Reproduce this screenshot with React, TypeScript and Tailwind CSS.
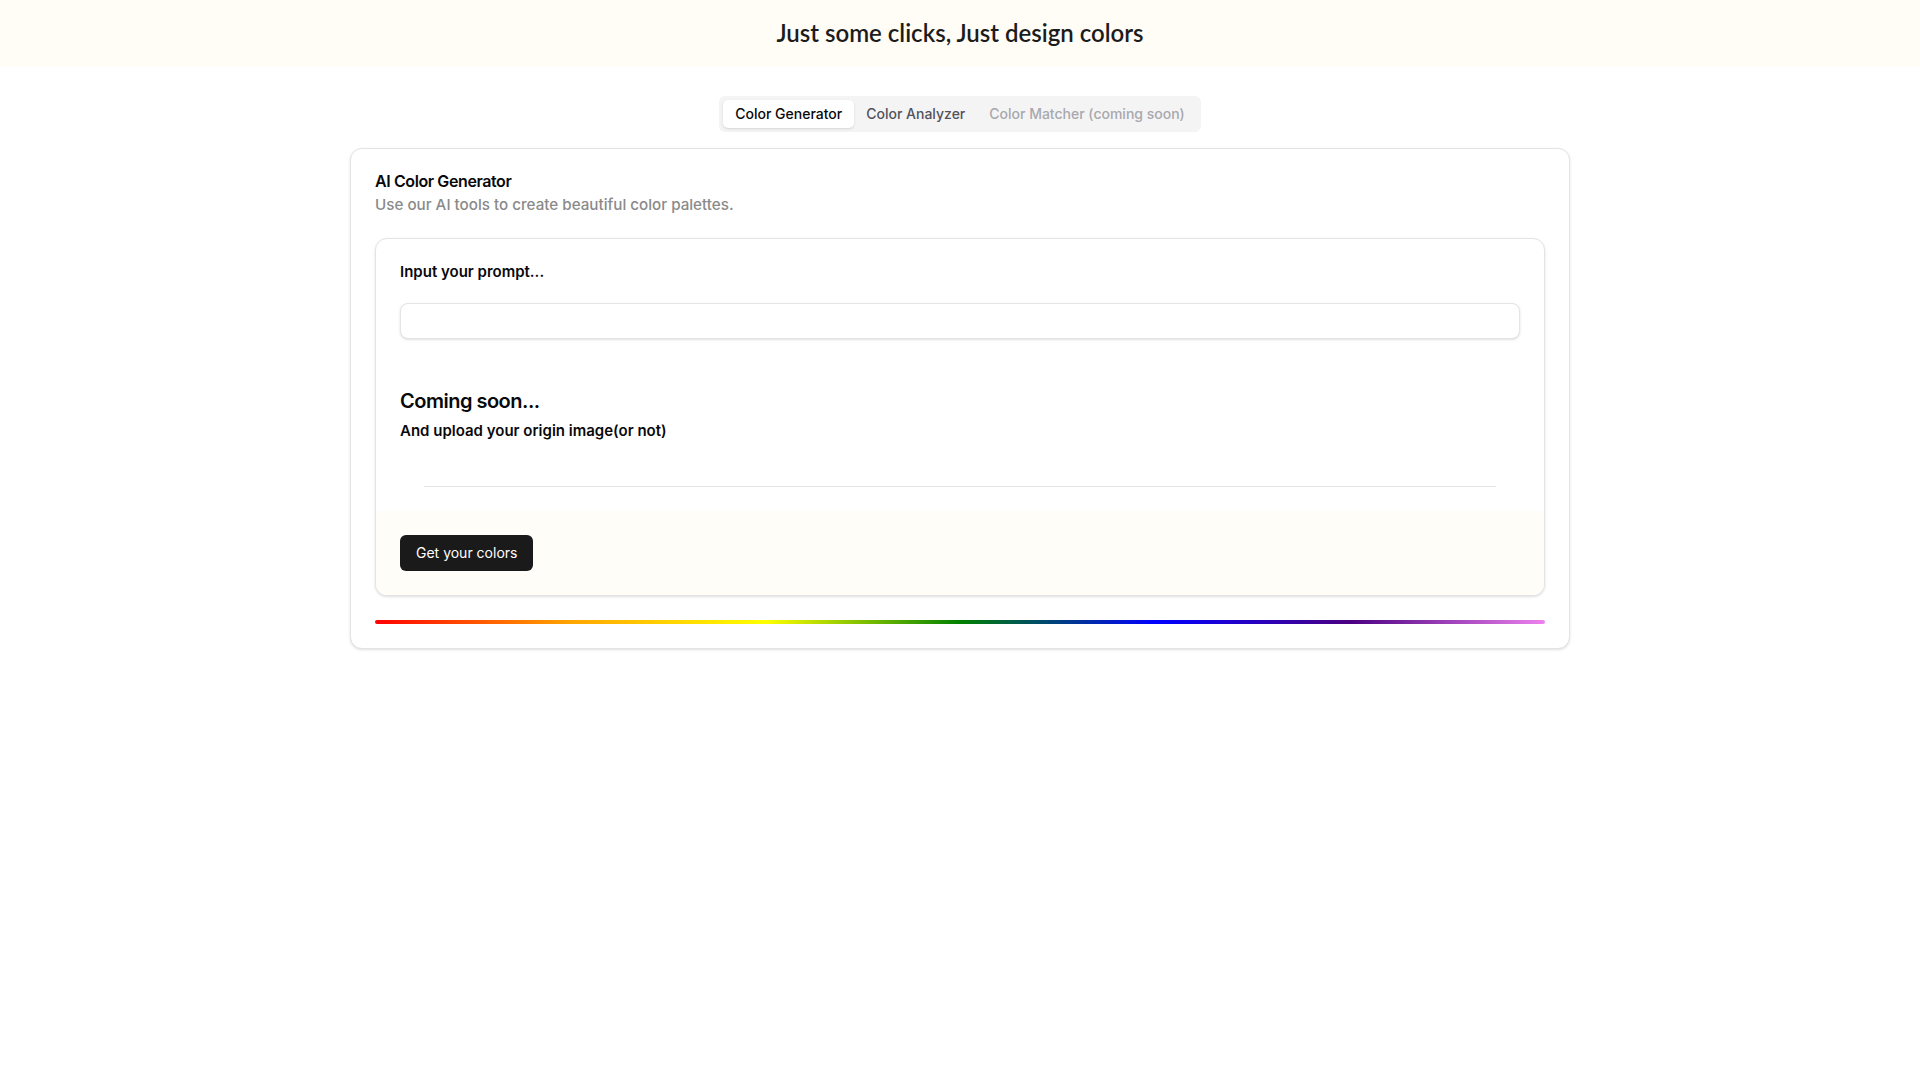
import React from "react";

const tabs = [
  { label: "Color Generator", state: "active" },
  { label: "Color Analyzer", state: "idle" },
  { label: "Color Matcher (coming soon)", state: "disabled" },
];

const Tabs = () => {
  return (
    <div className="flex items-center h-9 rounded-md bg-[#f4f4f5] p-1 text-sm">
      {tabs.map((t) => (
        <button
          key={t.label}
          className={
            t.state === "active"
              ? "h-7 px-3 rounded-[5px] bg-white text-[#09090b] font-medium shadow-sm"
              : t.state === "idle"
              ? "h-7 px-3 text-[#52525b] font-medium"
              : "h-7 px-3 text-[#a8a8ad] font-medium cursor-not-allowed"
          }
        >
          {t.label}
        </button>
      ))}
    </div>
  );
};

export default function App() {
  return (
    <div className="min-h-screen bg-white text-[#09090b] font-['Inter','Liberation_Sans',sans-serif]">
      <header className="h-[66px] flex items-center justify-center bg-[#fffdf6]">
        <h1 className="text-[24px] font-semibold text-[#1c1c1c] font-['Lato','Open_Sans',sans-serif]">
          Just some clicks, Just design colors
        </h1>
      </header>

      <main className="flex flex-col items-center mt-[30px]">
        <Tabs />

        <div className="w-[1220px] mt-4 rounded-xl border border-[#e4e4e7] bg-white shadow-sm">
          <div className="flex flex-col gap-1.5 px-6 pt-6 pb-[23px]">
            <h2 className="text-base font-semibold leading-none tracking-tight">AI Color Generator</h2>
            <p className="text-[15.2px] font-medium leading-5 text-[#8a8a8a]">Use our AI tools to create beautiful color palettes.</p>
          </div>

          <div className="px-6 pb-6">
            <div className="rounded-xl border border-[#e4e4e7] bg-white shadow-sm overflow-hidden">
              <div className="flex flex-col px-6 pt-[23px] pb-6">
                <label className="text-[15px] font-semibold leading-5">Input your prompt...</label>
                <input
                  type="text"
                  className="mt-[21px] h-9 w-full rounded-lg border border-[#e4e4e7] bg-white px-3 text-sm outline-none shadow-sm"
                />
                <h3 className="mt-12 text-xl font-semibold leading-7 tracking-tight">Coming soon...</h3>
                <p className="mt-1.5 text-[15px] font-semibold leading-5">And upload your origin image(or not)</p>
                <div className="mx-6 mt-[45px] h-px bg-[#e4e4e7]" />
              </div>
              <div className="bg-[#fffdf7] p-6">
                <button className="h-9 px-4 rounded-md bg-[#1a1a1a] text-white text-sm">Get your colors</button>
              </div>
            </div>

            <div className="mt-6 h-1 rounded-full bg-[linear-gradient(to_right,red,orange,yellow,green,blue,indigo,violet)]" />
          </div>
        </div>
      </main>
    </div>
  );
}
